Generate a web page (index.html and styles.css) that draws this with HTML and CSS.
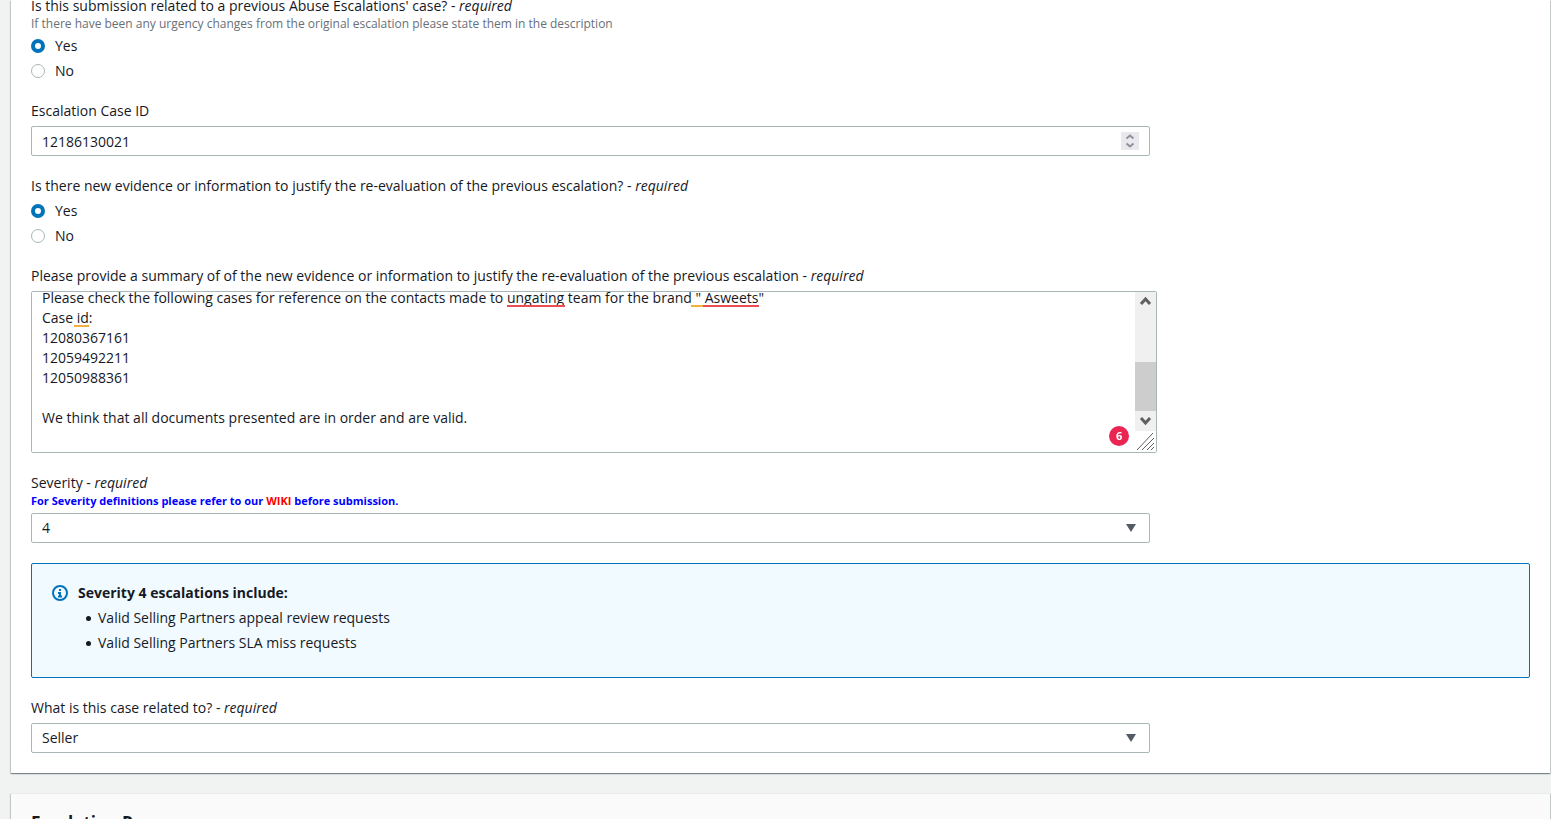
FILE: index.html
```html
<!DOCTYPE html>
<html lang="en">
<head>
<meta charset="utf-8">
<title>Escalation form</title>
<link rel="stylesheet" href="styles.css">
</head>
<body>
<main class="page">
  <section class="card">
    <form class="form">
      <fieldset class="field">
        <legend class="label">Is this submission related to a previous Abuse Escalations' case? - <em>required</em></legend>
        <p class="hint">If there have been any urgency changes from the original escalation please state them in the description</p>
        <div class="options">
          <label class="option"><input class="radio" type="radio" name="related" checked>Yes</label>
          <label class="option"><input class="radio" type="radio" name="related">No</label>
        </div>
      </fieldset>

      <div class="field">
        <label class="label" for="case-id">Escalation Case ID</label>
        <div class="control-wrap">
          <input class="control" id="case-id" type="text" inputmode="numeric" value="12186130021">
          <svg class="stepper" viewBox="0 0 18 18" aria-hidden="true"><path d="M5.500 6.500 9 3.500l3.500 3M5.500 11.500 9 14.500l3.500-3" /></svg>
        </div>
      </div>

      <fieldset class="field">
        <legend class="label">Is there new evidence or information to justify the re-evaluation of the previous escalation? - <em>required</em></legend>
        <div class="options">
          <label class="option"><input class="radio" type="radio" name="evidence" checked>Yes</label>
          <label class="option"><input class="radio" type="radio" name="evidence">No</label>
        </div>
      </fieldset>

      <div class="field">
        <label class="label" for="summary">Please provide a summary of of the new evidence or information to justify the re-evaluation of the previous escalation - <em>required</em></label>
        <div class="summary-wrap">
          <textarea class="summary" id="summary" spellcheck="false">









Please check the following cases for reference on the contacts made to ungating team for the brand " Asweets"
Case id:
12080367161
12059492211
12050988361

We think that all documents presented are in order and are valid.
</textarea>
          <span class="mark mark-ungating"></span>
          <span class="mark mark-quote"></span>
          <span class="mark mark-asweets"></span>
          <span class="mark mark-id"></span>
          <div class="rail" aria-hidden="true">
            <svg class="arrow" viewBox="0 0 21 20"><path d="M6 12l4.500-5 4.500 5"/></svg>
            <div class="track"><div class="thumb"></div></div>
            <svg class="arrow" viewBox="0 0 21 20"><path d="M6 7l4.500 5L15 7"/></svg>
            <svg class="grip" viewBox="0 0 21 21"><path d="M2 19L18 2M7 19L19 7M12 19l7-7M16 19l3-3"/></svg>
          </div>
          <span class="badge">6</span>
        </div>
      </div>

      <div class="field">
        <label class="label" for="severity">Severity - <em>required</em></label>
        <p class="notice">For Severity definitions please refer to our <a class="wiki" href="#">WIKI</a> before submission.</p>
        <select class="control select" id="severity"><option>4</option></select>
      </div>

      <div class="alert">
        <svg class="info" viewBox="0 0 16 16" aria-hidden="true"><circle cx="8" cy="8" r="7"/><path d="M8 4v2M6 8h2v3.500M6 11.500h4"/></svg>
        <div class="alert-body">
          <strong>Severity 4 escalations include:</strong>
          <ul class="list">
            <li>Valid Selling Partners appeal review requests</li>
            <li>Valid Selling Partners SLA miss requests</li>
          </ul>
        </div>
      </div>

      <div class="field">
        <label class="label" for="related-to">What is this case related to? - <em>required</em></label>
        <select class="control select" id="related-to"><option>Seller</option></select>
      </div>
    </form>
  </section>
  <section class="card card-next">
    <h2 class="heading">Escalation Reason</h2>
  </section>
</main>
<script src="script.js"></script>
</body>
</html>
```

FILE: script.js
```js
const summary = document.getElementById('summary');
summary.scrollTop = summary.scrollHeight;
```

FILE: styles.css
```css
* { box-sizing: border-box; }
html { height: 100%; overflow: hidden; }
body {
  height: 100%;
  margin: 0;
  overflow: hidden;
  background: #f1f3f3;
  color: #16191f;
  font: 14px/20px "Open Sans", "Noto Sans", sans-serif;
}
p, h2, ul, fieldset { margin: 0; padding: 0; border: 0; }
.page { display: flex; flex-direction: column; gap: 20px; padding: 0 1px 0 11px; }
.card {
  background: #fff;
  box-shadow: 0 1px 1px 0 rgba(0, 28, 36, .3), 1px 1px 1px 0 rgba(0, 28, 36, .15), -1px 1px 1px 0 rgba(0, 28, 36, .15);
}
.form { display: flex; flex-direction: column; gap: 20px; padding: 0 20px 20px; margin-top: -4px; }
.field { min-width: 0; }
.label { display: block; padding: 0; margin-bottom: 5px; }
legend.label { margin-bottom: 0; }
.hint { font-size: 12px; line-height: 16px; color: #687078; }
.options { display: flex; flex-direction: column; gap: 5px; padding-top: 5px; }
.hint + .options { padding-top: 4px; }
.option { display: flex; align-items: center; gap: 10px; }
.radio {
  appearance: none;
  width: 14px;
  height: 14px;
  margin: 0;
  border: 1px solid #aab7b8;
  border-radius: 50%;
  background: #fff;
}
.radio:checked { border: 4px solid #0073bb; }
.control-wrap { position: relative; width: calc(75% - 5px); }
.control {
  display: block;
  width: calc(75% - 5px);
  height: 30px;
  padding: 4px 10px;
  border: 1px solid #aab7b8;
  border-radius: 2px;
  background: #fff;
  color: inherit;
  font: inherit;
}
.control-wrap .control { width: 100%; }
.stepper {
  position: absolute;
  right: 11px;
  top: 6px;
  width: 18px;
  height: 18px;
  background: #e9e9ed;
  fill: none;
  stroke: #8f8f9d;
  stroke-width: 2;
}
.select {
  appearance: none;
  background: #fff url("data:image/svg+xml,%3Csvg xmlns='http://www.w3.org/2000/svg' width='10' height='8'%3E%3Cpath d='M0 0h10L5 8z' fill='%23545b64'/%3E%3C/svg%3E") no-repeat right 13px center;
}
.summary-wrap { position: relative; width: calc(75% + 2px); }
.summary {
  display: block;
  width: 100%;
  height: 162px;
  padding: 4px 31px 4px 10px;
  border: 1px solid #aab7b8;
  border-radius: 2px;
  color: inherit;
  font: inherit;
  overflow-y: auto;
  resize: none;
}
.rail {
  position: absolute;
  top: 1px;
  right: 1px;
  bottom: 1px;
  width: 21px;
  display: flex;
  flex-direction: column;
  background: #f0f0f0;
}
.arrow { height: 20px; fill: none; stroke: #606060; stroke-width: 3; }
.track { flex: 1; display: flex; flex-direction: column; justify-content: flex-end; }
.thumb { height: 50%; background: #cdcdcd; }
.grip { height: 21px; background: #fff; fill: none; stroke: #606060; stroke-width: 1; }
.mark { position: absolute; height: 2px; background: #eb4d55; }
.mark-ungating { left: 476px; top: 14px; width: 58px; }
.mark-quote { left: 660px; top: 14px; width: 12px; background: #f3af3d; }
.mark-asweets { left: 672px; top: 14px; width: 56px; }
.mark-id { left: 43px; top: 34px; width: 15px; background: #f3af3d; }
.badge {
  position: absolute;
  right: 28px;
  bottom: 7px;
  width: 20px;
  border-radius: 50%;
  background: #eb2552;
  color: #fff;
  font-size: 11px;
  font-weight: 700;
  text-align: center;
}
.label + .notice { margin-top: -5px; }
.notice { margin-bottom: 4px; font-size: 11px; line-height: 16px; font-weight: 700; color: #00f; }
.wiki { color: #f00; text-decoration: none; }
.alert {
  display: flex;
  gap: 10px;
  padding: 19px 20px 24px;
  border: 1px solid #0073bb;
  border-radius: 2px;
  background: #f1faff;
}
.info { width: 16px; height: 20px; fill: none; stroke: #0073bb; stroke-width: 2; }
.list { display: flex; flex-direction: column; gap: 5px; padding: 5px 0 0 8px; list-style: none; }
.list li { display: flex; align-items: center; gap: 7px; }
.list li::before { content: ""; width: 5px; height: 5px; border-radius: 50%; background: #16191f; }
.card-next { border-top: 1px solid #eaeded; background: #fafafa; padding: 18px 20px; }
.heading { font-size: 17px; line-height: 22px; }
```
